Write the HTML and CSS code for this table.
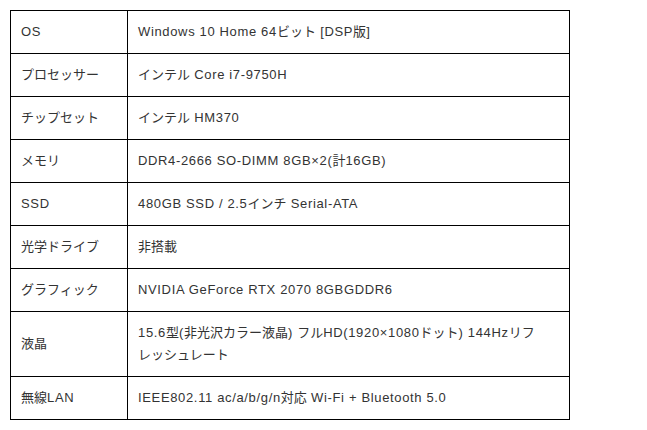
FILE: index.html
```html
<!DOCTYPE html>
<html lang="ja">
<head>
<meta charset="utf-8">
<link rel="stylesheet" href="styles.css">
</head>
<body>
<table class="spec">
<tr><th><span class="l">OS</span></th><td><span class="l">Windows 10 Home 64</span>ビット<span class="l"> [DSP</span>版<span class="l">]</span></td></tr>
<tr><th>プロセッサー</th><td>インテル<span class="l"> Core i7-9750H</span></td></tr>
<tr><th>チップセット</th><td>インテル<span class="l"> HM370</span></td></tr>
<tr><th>メモリ</th><td><span class="l">DDR4-2666 SO-DIMM 8GB×2(</span>計<span class="l">16GB)</span></td></tr>
<tr><th><span class="l">SSD</span></th><td><span class="l">480GB SSD / 2.5</span>インチ<span class="l"> Serial-ATA</span></td></tr>
<tr><th>光学ドライブ</th><td>非搭載</td></tr>
<tr><th>グラフィック</th><td><span class="l">NVIDIA GeForce RTX 2070 8GBGDDR6</span></td></tr>
<tr><th>液晶</th><td class="wrap"><span class="l">15.6</span>型<span class="l">(</span>非光沢カラー液晶<span class="l">) </span>フル<span class="l">HD(1920×1080</span>ドット<span class="l">) 144Hz</span>リフレッシュレート</td></tr>
<tr><th>無線<span class="l">LAN</span></th><td><span class="l">IEEE802.11 ac/a/b/g/n</span>対応<span class="l"> Wi-Fi + Bluetooth 5.0</span></td></tr>
</table>
</body>
</html>
```
FILE: styles.css
```css
html, body {
  margin: 0;
  background: #fff;
}
body {
  padding: 10px;
  font-family: "Liberation Sans", "Noto Sans CJK JP", sans-serif;
  font-size: 13px;
  color: #333;
}
.spec {
  width: 560px;
  border-collapse: collapse;
  table-layout: fixed;
}
.spec th,
.spec td {
  border: 1px solid #000;
  padding: 10px 10px;
  line-height: 22px;
  text-align: left;
  font-weight: normal;
  vertical-align: middle;
}
.spec th {
  width: 96px;
}
.spec .wrap {
  padding-right: 26px;
}
.l {
  letter-spacing: 0.65px;
}
```
